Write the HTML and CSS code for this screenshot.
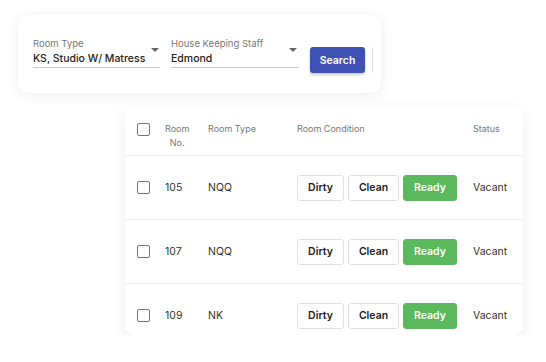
FILE: index.html
```html
<!DOCTYPE html>
<html lang="en">
<head>
    <meta charset="UTF-8">
    <meta name="viewport" content="width=device-width, initial-scale=1.0">
    <title>Housekeeping - Room Status</title>
    <link rel="stylesheet" href="styles.css">
</head>
<body>
    <!-- Filter bar -->
    <section class="filter-card">
        <div class="field field-type">
            <label>Room Type</label>
            <div class="select">
                <span>KS, Studio W/ Matress</span>
                <span class="caret"></span>
            </div>
        </div>
        <div class="field field-staff">
            <label>House Keeping Staff</label>
            <div class="select">
                <span>Edmond</span>
                <span class="caret"></span>
            </div>
        </div>
        <button class="search-btn">Search</button>
        <div class="clipped-btn"></div>
    </section>

    <!-- Room list -->
    <section class="room-card">
        <div class="room-row room-head">
            <span class="checkbox"></span>
            <span class="head-no">Room<br>No.</span>
            <span>Room Type</span>
            <span>Room Condition</span>
            <span>Status</span>
        </div>
        <div id="room-rows"></div>
    </section>

    <script>
        const rooms = [
            { no: 105, type: 'NQQ', status: 'Vacant' },
            { no: 107, type: 'NQQ', status: 'Vacant' },
            { no: 109, type: 'NK', status: 'Vacant' }
        ];

        const roomRows = document.getElementById('room-rows');
        rooms.forEach(room => {
            const row = document.createElement('div');
            row.className = 'room-row';
            row.innerHTML = `
                <span class="checkbox"></span>
                <span>${room.no}</span>
                <span>${room.type}</span>
                <span class="condition">
                    <button class="cond-btn">Dirty</button>
                    <button class="cond-btn">Clean</button>
                    <button class="cond-btn ready">Ready</button>
                </span>
                <span>${room.status}</span>
            `;
            roomRows.appendChild(row);
        });
    </script>
</body>
</html>
```

FILE: styles.css
```css
body {
    font-family: Inter, "Noto Sans", sans-serif;
    margin: 0;
    padding: 0;
    background-color: #fff;
    color: #222;
}

.filter-card {
    margin: 15px 0 0 18px;
    width: 363px;
    height: 78px;
    box-sizing: border-box;
    padding: 0 0 0 15px;
    display: flex;
    align-items: flex-start;
    background-color: white;
    border-radius: 10px;
    box-shadow: 0 2px 14px rgba(0, 0, 0, 0.08);
    overflow: hidden;
}

.field {
    flex-shrink: 0;
    margin-top: 22px;
    display: flex;
    flex-direction: column;
}

.field-type {
    width: 127px;
}

.field-staff {
    width: 127px;
    margin-left: 11px;
}

.field label {
    font-size: 9.5px;
    color: #777;
    line-height: 13px;
}

.select {
    display: flex;
    justify-content: space-between;
    align-items: flex-start;
    font-size: 10.5px;
    font-weight: 500;
    color: #222;
    line-height: 16px;
    padding-top: 1px;
    height: 16px;
    white-space: nowrap;
    border-bottom: 1px solid #c8c8c8;
}

.caret {
    margin: 0 1px 0 0;
    width: 0;
    height: 0;
    border-left: 4px solid transparent;
    border-right: 4px solid transparent;
    border-top: 4px solid #666;
    margin-top: -3px;
}

.search-btn {
    flex-shrink: 0;
    margin: 32px 0 0 12px;
    width: 55px;
    height: 26px;
    background-color: #3f51b5;
    color: white;
    border: none;
    border-radius: 3px;
    font-family: Inter, sans-serif;
    font-size: 10.5px;
    font-weight: 600;
    box-shadow: 0 2px 3px rgba(0, 0, 0, 0.2);
}

.clipped-btn {
    flex-shrink: 0;
    margin: 32px 0 0 7px;
    width: 20px;
    height: 26px;
    border-left: 1px solid #e2e2e2;
    border-radius: 3px;
}

.room-card {
    margin: 14px 0 0 125px;
    width: 398px;
    height: 228px;
    background-color: white;
    border-radius: 10px;
    box-shadow: 0 4px 16px rgba(0, 0, 0, 0.08);
    overflow: hidden;
}

.room-row {
    display: grid;
    grid-template-columns: 28px 43px 89px 176px 1fr;
    align-items: center;
    padding-left: 12px;
    height: 63px;
    border-top: 1px solid #e8e8e8;
    font-size: 10.5px;
    color: #333;
}

.room-head {
    height: 48px;
    align-items: start;
    border-top: none;
    font-size: 9px;
    color: #777;
    line-height: 14px;
}

.room-head > span {
    margin-top: 15px;
}

.head-no {
    display: inline-block;
    justify-self: start;
    text-align: center;
}

.checkbox {
    display: inline-block;
    width: 11px;
    height: 11px;
    border: 1.5px solid #777;
    border-radius: 2px;
}

.room-head .checkbox {
    margin-top: 16px;
}

.condition {
    display: flex;
    gap: 4px;
}

.cond-btn {
    height: 26px;
    padding: 0;
    background-color: white;
    border: 1px solid #e2e2e2;
    border-radius: 3px;
    font-family: Inter, sans-serif;
    font-size: 10.5px;
    font-weight: 600;
    color: #222;
}

.cond-btn:nth-child(1) {
    width: 47px;
}

.cond-btn:nth-child(2) {
    width: 51px;
}

.cond-btn.ready {
    width: 54px;
    background-color: #5cb85c;
    border-color: #5cb85c;
    color: white;
}
```
